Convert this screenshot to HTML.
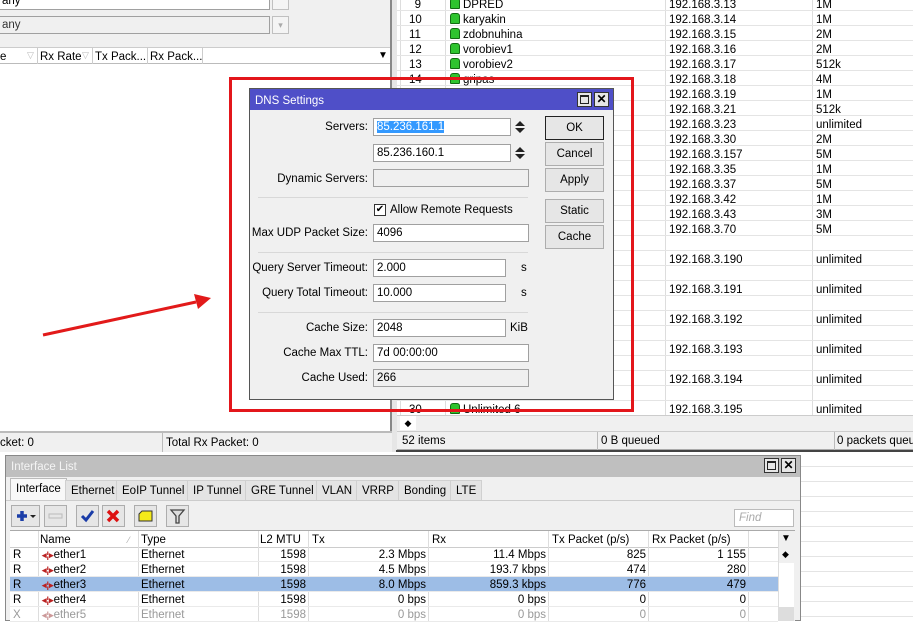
<!DOCTYPE html>
<html><head><meta charset="utf-8"><style>
*{margin:0;padding:0;box-sizing:border-box}
body{width:913px;height:621px;overflow:hidden;position:relative;background:#fff;font-family:"Liberation Sans",sans-serif;font-size:11.5px;color:#000}
.a{position:absolute;white-space:nowrap}
.in{position:absolute;background:#fff;border:1px solid #a0a0a0;height:18px;padding:1px 3px;line-height:15px}
.ro{background:#f0f0f0}
.lb{position:absolute;text-align:right;width:200px;line-height:18px}
.bt{position:absolute;left:545px;width:59px;height:24px;border:1px solid #adadad;background:#e6e6e6;text-align:center;line-height:22px}
.row{position:absolute;left:397px;width:516px;height:15px;border-bottom:1px solid #e4e4e4;line-height:14px}
.row span{top:2px}
.ic{display:inline-block;width:10px;height:11px;background:#2ec42e;border:1px solid #126c12;border-radius:3px 3px 1px 1px;vertical-align:-1px;margin-right:3px}
.tab{position:absolute;top:480px;height:21px;line-height:20px;padding:0 5px;background:#e4e4e4;border:1px solid #d0d0d0;border-bottom:none}
.tb{position:absolute;top:505px;width:23px;height:22px;border:1px solid #adadad;background:#e6e6e6;text-align:center;line-height:20px;font-weight:bold}
.ir{position:absolute;left:10px;width:768px;height:15px;line-height:14px;border-bottom:1px solid #eaeaea}
.ir span{position:absolute;top:1px}
</style></head><body>

<!-- left window -->
<div class="a" style="left:0;top:0;width:392px;height:64px;background:#f0f0f0"></div>
<div class="in" style="left:-2px;top:-8px;width:272px">any</div>
<div class="a" style="left:272px;top:-8px;width:17px;height:18px;border:1px solid #c0c0c0;background:#f4f4f4"></div>
<div class="in" style="left:-2px;top:16px;width:272px;background:#f0f0f0;color:#333">any</div>
<div class="a" style="left:272px;top:16px;width:17px;height:18px;border:1px solid #c0c0c0;background:#f4f4f4;color:#aaa;font-size:9px;text-align:center;line-height:16px">▾</div>
<div class="a" style="left:0;top:47px;width:390px;height:17px;background:#fff;border-bottom:1px solid #bbb;border-top:1px solid #ccc"></div>
<div class="a" style="left:0;top:50px;line-height:14px">e</div>
<div class="a" style="left:27px;top:50px;color:#bbb;font-size:9px">▽</div>
<div class="a" style="left:37px;top:48px;width:1px;height:16px;background:#ccc"></div>
<div class="a" style="left:40px;top:50px;line-height:14px">Rx Rate</div>
<div class="a" style="left:82px;top:50px;color:#bbb;font-size:9px">▽</div>
<div class="a" style="left:92px;top:48px;width:1px;height:16px;background:#ccc"></div>
<div class="a" style="left:95px;top:50px;line-height:14px">Tx Pack...</div>
<div class="a" style="left:147px;top:48px;width:1px;height:16px;background:#ccc"></div>
<div class="a" style="left:150px;top:50px;line-height:14px">Rx Pack...</div>
<div class="a" style="left:202px;top:48px;width:1px;height:16px;background:#ccc"></div>
<div class="a" style="left:378px;top:50px;font-size:10px">▼</div>
<div class="a" style="left:390px;top:0;width:2px;height:452px;background:#888"></div>
<div class="a" style="left:392px;top:0;width:5px;height:452px;background:#e6e6e6"></div>
<div class="a" style="left:0;top:431px;width:392px;height:21px;background:#f0f0f0;border-top:2px solid #bbb"></div>
<div class="a" style="left:0;top:436px;line-height:14px">cket: 0</div>
<div class="a" style="left:162px;top:433px;width:1px;height:19px;background:#bbb"></div>
<div class="a" style="left:166px;top:436px;line-height:14px">Total Rx Packet: 0</div>

<!-- right list -->
<div class="a" style="left:400px;top:0;width:1px;height:415px;background:#ddd"></div>
<div class="a" style="left:445px;top:0;width:1px;height:415px;background:#ddd"></div>
<div class="a" style="left:665px;top:0;width:1px;height:415px;background:#ddd"></div>
<div class="a" style="left:812px;top:0;width:1px;height:415px;background:#ddd"></div>
<div class="row" style="top:-4px"><span class="a" style="left:12px;width:12px;text-align:right">9</span><span class="a" style="left:53px"><i class="ic"></i>DPRED</span><span class="a" style="left:272px">192.168.3.13</span><span class="a" style="left:419px">1M</span></div>
<div class="row" style="top:11px"><span class="a" style="left:12px">10</span><span class="a" style="left:53px"><i class="ic"></i>karyakin</span><span class="a" style="left:272px">192.168.3.14</span><span class="a" style="left:419px">1M</span></div>
<div class="row" style="top:26px"><span class="a" style="left:12px">11</span><span class="a" style="left:53px"><i class="ic"></i>zdobnuhina</span><span class="a" style="left:272px">192.168.3.15</span><span class="a" style="left:419px">2M</span></div>
<div class="row" style="top:41px"><span class="a" style="left:12px">12</span><span class="a" style="left:53px"><i class="ic"></i>vorobiev1</span><span class="a" style="left:272px">192.168.3.16</span><span class="a" style="left:419px">2M</span></div>
<div class="row" style="top:56px"><span class="a" style="left:12px">13</span><span class="a" style="left:53px"><i class="ic"></i>vorobiev2</span><span class="a" style="left:272px">192.168.3.17</span><span class="a" style="left:419px">512k</span></div>
<div class="row" style="top:71px"><span class="a" style="left:12px">14</span><span class="a" style="left:53px"><i class="ic"></i>gripas</span><span class="a" style="left:272px">192.168.3.18</span><span class="a" style="left:419px">4M</span></div>
<div class="row" style="top:86px"><span class="a" style="left:272px">192.168.3.19</span><span class="a" style="left:419px">1M</span></div>
<div class="row" style="top:101px"><span class="a" style="left:272px">192.168.3.21</span><span class="a" style="left:419px">512k</span></div>
<div class="row" style="top:116px"><span class="a" style="left:272px">192.168.3.23</span><span class="a" style="left:419px">unlimited</span></div>
<div class="row" style="top:131px"><span class="a" style="left:272px">192.168.3.30</span><span class="a" style="left:419px">2M</span></div>
<div class="row" style="top:146px"><span class="a" style="left:272px">192.168.3.157</span><span class="a" style="left:419px">5M</span></div>
<div class="row" style="top:161px"><span class="a" style="left:272px">192.168.3.35</span><span class="a" style="left:419px">1M</span></div>
<div class="row" style="top:176px"><span class="a" style="left:272px">192.168.3.37</span><span class="a" style="left:419px">5M</span></div>
<div class="row" style="top:191px"><span class="a" style="left:272px">192.168.3.42</span><span class="a" style="left:419px">1M</span></div>
<div class="row" style="top:206px"><span class="a" style="left:272px">192.168.3.43</span><span class="a" style="left:419px">3M</span></div>
<div class="row" style="top:221px"><span class="a" style="left:272px">192.168.3.70</span><span class="a" style="left:419px">5M</span></div>
<div class="row" style="top:236px"></div>
<div class="row" style="top:251px"><span class="a" style="left:272px">192.168.3.190</span><span class="a" style="left:419px">unlimited</span></div>
<div class="row" style="top:266px"></div>
<div class="row" style="top:281px"><span class="a" style="left:272px">192.168.3.191</span><span class="a" style="left:419px">unlimited</span></div>
<div class="row" style="top:296px"></div>
<div class="row" style="top:311px"><span class="a" style="left:272px">192.168.3.192</span><span class="a" style="left:419px">unlimited</span></div>
<div class="row" style="top:326px"></div>
<div class="row" style="top:341px"><span class="a" style="left:272px">192.168.3.193</span><span class="a" style="left:419px">unlimited</span></div>
<div class="row" style="top:356px"></div>
<div class="row" style="top:371px"><span class="a" style="left:272px">192.168.3.194</span><span class="a" style="left:419px">unlimited</span></div>
<div class="row" style="top:386px"></div>
<div class="row" style="top:401px"><span class="a" style="left:12px">30</span><span class="a" style="left:53px"><i class="ic"></i>Unlimited 6</span><span class="a" style="left:272px">192.168.3.195</span><span class="a" style="left:419px">unlimited</span></div>
<div class="a" style="left:397px;top:415px;width:516px;height:16px;background:#f0f0f0;border-top:1px solid #ccc"></div>
<div class="a" style="left:400px;top:416px;width:16px;height:14px;background:#fff;font-size:9px;text-align:center;line-height:14px">◆</div>
<div class="a" style="left:397px;top:431px;width:516px;height:19px;background:#f0f0f0;border-top:1px solid #ccc;border-bottom:1px solid #aaa"></div>
<div class="a" style="left:402px;top:434px;line-height:14px">52 items</div>
<div class="a" style="left:597px;top:432px;width:1px;height:18px;background:#bbb"></div>
<div class="a" style="left:601px;top:434px;line-height:14px">0 B queued</div>
<div class="a" style="left:834px;top:432px;width:1px;height:18px;background:#bbb"></div>
<div class="a" style="left:837px;top:434px;line-height:14px">0 packets queue</div>
<div class="a" style="left:396px;top:450px;width:517px;height:2px;background:#444"></div>
<div class="a" style="left:800px;top:452px;width:113px;height:169px;background:repeating-linear-gradient(#fff 0 14px,#e4e4e4 14px 15px)"></div>

<!-- Interface list -->
<div class="a" style="left:5px;top:455px;width:796px;height:166px;background:#f0f0f0;border:1px solid #888"></div>
<div class="a" style="left:6px;top:456px;width:794px;height:21px;background:#bfbfbf"></div>
<div class="a" style="left:11px;top:460px;color:#f4f4f4;line-height:15px">Interface List</div>
<div class="a" style="left:764px;top:458px;width:15px;height:15px;border:1px solid #333;background:#e6e6e6"><div style="margin:2px;width:9px;height:9px;border:1px solid #222;border-top-width:2px"></div></div>
<div class="a" style="left:781px;top:458px;width:15px;height:15px;border:1px solid #333;background:#e6e6e6;text-align:center;line-height:13px;font-weight:bold;font-size:12px">✕</div>
<div class="tab" style="left:10px;top:478px;height:23px;background:#f8f8f8;border-color:#bbb">Interface</div>
<div class="tab" style="left:65px">Ethernet</div>
<div class="tab" style="left:116px">EoIP Tunnel</div>
<div class="tab" style="left:187px">IP Tunnel</div>
<div class="tab" style="left:245px">GRE Tunnel</div>
<div class="tab" style="left:316px">VLAN</div>
<div class="tab" style="left:356px">VRRP</div>
<div class="tab" style="left:398px">Bonding</div>
<div class="tab" style="left:450px">LTE</div>
<div class="a" style="left:6px;top:500px;width:794px;height:1px;background:#ccc"></div>
<div class="tb" style="left:11px;width:29px"><svg width="27" height="20"><path d="M5 10h10M10 5v10" stroke="#1b3ea8" stroke-width="3.5"/><path d="M18 9h6l-3 3z" fill="#222"/></svg></div>
<div class="tb" style="left:44px"><svg width="21" height="20"><rect x="4" y="8" width="13" height="4" fill="none" stroke="#bbb"/></svg></div>
<div class="tb" style="left:76px"><svg width="21" height="20"><path d="M5 10l4 4 7-9" stroke="#1a3ca8" stroke-width="3" fill="none"/></svg></div>
<div class="tb" style="left:102px"><svg width="21" height="20"><path d="M5 5l10 10M15 5L5 15" stroke="#d11" stroke-width="3.5"/></svg></div>
<div class="tb" style="left:134px"><svg width="21" height="20"><path d="M4 8l3-3h10v10H4z" fill="#f4ea1a" stroke="#333"/></svg></div>
<div class="tb" style="left:166px"><svg width="21" height="20"><path d="M4 4h13l-5 6v7h-3v-7z" fill="#ddd" stroke="#444" stroke-width="1.3"/></svg></div>
<div class="a" style="left:734px;top:509px;width:60px;height:18px;background:#fff;border:1px solid #bbb;color:#aaa;font-style:italic;padding-left:4px;line-height:16px">Find</div>
<div class="a" style="left:10px;top:530px;width:785px;height:91px;background:#fff;border-top:1px solid #aaa"></div>
<div class="ir" style="top:531px;height:17px;line-height:16px;border-bottom:1px solid #ccc">
<span style="left:30px">Name</span><span style="left:118px;color:#aaa;font-size:9px">⁄</span><span style="left:131px">Type</span><span style="left:250px">L2 MTU</span><span style="left:302px">Tx</span><span style="left:422px">Rx</span><span style="left:542px">Tx Packet (p/s)</span><span style="left:642px">Rx Packet (p/s)</span></div>
<div class="a" style="left:38px;top:531px;width:1px;height:90px;background:#ddd"></div>
<div class="a" style="left:138px;top:531px;width:1px;height:90px;background:#ddd"></div>
<div class="a" style="left:258px;top:531px;width:1px;height:90px;background:#ddd"></div>
<div class="a" style="left:308px;top:531px;width:1px;height:90px;background:#ddd"></div>
<div class="a" style="left:428px;top:531px;width:1px;height:90px;background:#ddd"></div>
<div class="a" style="left:548px;top:531px;width:1px;height:90px;background:#ddd"></div>
<div class="a" style="left:648px;top:531px;width:1px;height:90px;background:#ddd"></div>
<div class="a" style="left:748px;top:531px;width:1px;height:90px;background:#ddd"></div>
<div class="ir" style="top:547px"><span style="left:3px">R</span><span style="left:32px"><b style="color:#b22;font-size:9px">◂¦▸</b>ether1</span><span style="left:131px">Ethernet</span><span style="left:248px;width:48px;text-align:right">1598</span><span style="left:300px;width:116px;text-align:right">2.3 Mbps</span><span style="left:420px;width:116px;text-align:right">11.4 Mbps</span><span style="left:540px;width:96px;text-align:right">825</span><span style="left:640px;width:96px;text-align:right">1 155</span></div>
<div class="ir" style="top:562px"><span style="left:3px">R</span><span style="left:32px"><b style="color:#b22;font-size:9px">◂¦▸</b>ether2</span><span style="left:131px">Ethernet</span><span style="left:248px;width:48px;text-align:right">1598</span><span style="left:300px;width:116px;text-align:right">4.5 Mbps</span><span style="left:420px;width:116px;text-align:right">193.7 kbps</span><span style="left:540px;width:96px;text-align:right">474</span><span style="left:640px;width:96px;text-align:right">280</span></div>
<div class="ir" style="top:577px;background:#9dbde6;width:768px"><span style="left:3px">R</span><span style="left:32px"><b style="color:#b22;font-size:9px">◂¦▸</b>ether3</span><span style="left:131px">Ethernet</span><span style="left:248px;width:48px;text-align:right">1598</span><span style="left:300px;width:116px;text-align:right">8.0 Mbps</span><span style="left:420px;width:116px;text-align:right">859.3 kbps</span><span style="left:540px;width:96px;text-align:right">776</span><span style="left:640px;width:96px;text-align:right">479</span></div>
<div class="ir" style="top:592px"><span style="left:3px">R</span><span style="left:32px"><b style="color:#b22;font-size:9px">◂¦▸</b>ether4</span><span style="left:131px">Ethernet</span><span style="left:248px;width:48px;text-align:right">1598</span><span style="left:300px;width:116px;text-align:right">0 bps</span><span style="left:420px;width:116px;text-align:right">0 bps</span><span style="left:540px;width:96px;text-align:right">0</span><span style="left:640px;width:96px;text-align:right">0</span></div>
<div class="ir" style="top:607px;color:#999"><span style="left:3px">X</span><span style="left:32px"><b style="color:#c99;font-size:9px">◂¦▸</b>ether5</span><span style="left:131px">Ethernet</span><span style="left:248px;width:48px;text-align:right">1598</span><span style="left:300px;width:116px;text-align:right">0 bps</span><span style="left:420px;width:116px;text-align:right">0 bps</span><span style="left:540px;width:96px;text-align:right">0</span><span style="left:640px;width:96px;text-align:right">0</span></div>
<div class="a" style="left:778px;top:531px;width:17px;height:90px;background:#f0f0f0;border-left:1px solid #ddd"></div>
<div class="a" style="left:781px;top:533px;font-size:10px">▼</div>
<div class="a" style="left:782px;top:549px;font-size:9px">◆</div>
<div class="a" style="left:779px;top:563px;width:15px;height:44px;background:#fff"></div>
<div class="a" style="left:779px;top:607px;width:15px;height:14px;background:#ddd"></div>

<!-- red arrow -->
<svg class="a" style="left:0;top:0" width="913" height="621"><line x1="43" y1="335" x2="196" y2="302" stroke="#e21a1a" stroke-width="3"/><polygon points="211,298 194,294 198,309" fill="#e21a1a"/></svg>

<!-- DNS dialog -->
<div class="a" style="left:249px;top:88px;width:365px;height:312px;background:#f0f0f0;border:1px solid #555"></div>
<div class="a" style="left:250px;top:89px;width:363px;height:21px;background:#4f4fc8"></div>
<div class="a" style="left:255px;top:94px;color:#fff;line-height:15px">DNS Settings</div>
<div class="a" style="left:577px;top:92px;width:15px;height:15px;border:1px solid #333;background:#e6e6e6"><div style="margin:2px;width:9px;height:9px;border:1px solid #222;border-top-width:2px"></div></div>
<div class="a" style="left:594px;top:92px;width:15px;height:15px;border:1px solid #333;background:#e6e6e6;text-align:center;line-height:13px;font-weight:bold;font-size:12px">✕</div>
<div class="lb" style="left:168px;top:118px">Servers:</div>
<div class="in" style="left:373px;top:118px;width:138px"><span style="background:#3399ff;color:#fff">85.236.161.1</span></div>
<svg class="a" style="left:514px;top:120px" width="12" height="14"><path d="M1 6L6 1L11 6zM1 8L6 13L11 8z" fill="#222"/></svg>
<div class="in" style="left:373px;top:144px;width:138px">85.236.160.1</div>
<svg class="a" style="left:514px;top:146px" width="12" height="14"><path d="M1 6L6 1L11 6zM1 8L6 13L11 8z" fill="#222"/></svg>
<div class="lb" style="left:168px;top:170px">Dynamic Servers:</div>
<div class="in ro" style="left:373px;top:169px;width:156px"></div>
<div class="a" style="left:258px;top:197px;width:270px;height:1px;background:#d8d8d8"></div>
<div class="a" style="left:374px;top:204px;width:12px;height:12px;border:1px solid #333;background:#fff;font-size:10px;line-height:10px;text-align:center">✔</div>
<div class="a" style="left:390px;top:203px;line-height:15px">Allow Remote Requests</div>
<div class="lb" style="left:168px;top:224px">Max UDP Packet Size:</div>
<div class="in" style="left:373px;top:224px;width:156px">4096</div>
<div class="a" style="left:258px;top:252px;width:270px;height:1px;background:#d8d8d8"></div>
<div class="lb" style="left:168px;top:259px">Query Server Timeout:</div>
<div class="in" style="left:373px;top:259px;width:133px">2.000</div>
<div class="a" style="left:521px;top:261px;line-height:15px">s</div>
<div class="lb" style="left:168px;top:284px">Query Total Timeout:</div>
<div class="in" style="left:373px;top:284px;width:133px">10.000</div>
<div class="a" style="left:521px;top:286px;line-height:15px">s</div>
<div class="a" style="left:258px;top:312px;width:270px;height:1px;background:#d8d8d8"></div>
<div class="lb" style="left:168px;top:319px">Cache Size:</div>
<div class="in" style="left:373px;top:319px;width:133px">2048</div>
<div class="a" style="left:510px;top:321px;line-height:15px">KiB</div>
<div class="lb" style="left:168px;top:344px">Cache Max TTL:</div>
<div class="in" style="left:373px;top:344px;width:156px">7d 00:00:00</div>
<div class="lb" style="left:168px;top:369px">Cache Used:</div>
<div class="in ro" style="left:373px;top:369px;width:156px">266</div>
<div class="bt" style="top:116px;border:1px solid #222">OK</div>
<div class="bt" style="top:142px">Cancel</div>
<div class="bt" style="top:168px">Apply</div>
<div class="bt" style="top:199px">Static</div>
<div class="bt" style="top:225px">Cache</div>

<!-- red rectangle -->
<div class="a" style="left:229px;top:77px;width:405px;height:335px;border:3px solid #e3161b"></div>
</body></html>
